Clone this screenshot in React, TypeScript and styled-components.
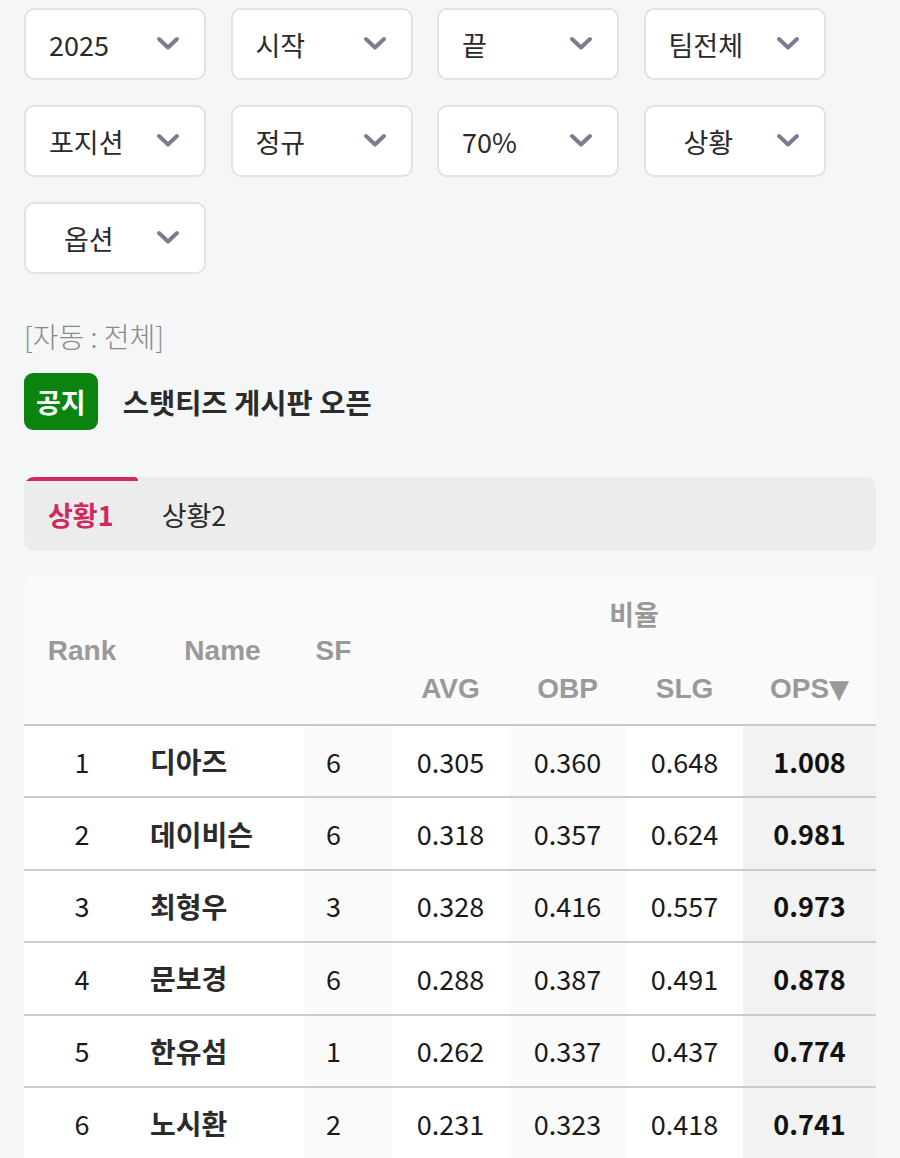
import React from "react";
import styled, { createGlobalStyle } from "styled-components";

const GlobalStyle = createGlobalStyle`
  body {
    margin: 0;
    background: #f5f6f8;
    font-family: "Noto Sans CJK KR", "Noto Sans", sans-serif;
    color: #222;
  }
`;

const Page = styled.div`
  padding: 8px 24px 0 24px;
  width: 852px;
`;

const FilterGrid = styled.div`
  display: grid;
  grid-template-columns: repeat(4, 182px);
  column-gap: 24.5px;
  row-gap: 25px;
`;

const Select = styled.div<{ $center?: boolean }>`
  box-sizing: border-box;
  height: 72px;
  background: #fff;
  border: 2px solid #e1e2e5;
  border-radius: 10px;
  display: flex;
  align-items: center;
  justify-content: space-between;
  padding: 0 24px 0 ${({ $center }) => ($center ? "38px" : "23px")};
  font-size: 27px;
  color: #2a2a2a;
`;

const Chevron = () => (
  <svg width="24" height="16" viewBox="0 0 24 16">
    <path d="M3 3 L12 11.5 L21 3" fill="none" stroke="#787d90" strokeWidth="4" strokeLinecap="round" strokeLinejoin="round" />
  </svg>
);

const AutoNote = styled.div`
  margin-top: 42px;
  font-size: 28px;
  font-weight: 300;
  color: #8a8a8a;
  line-height: 40px;
`;

const Notice = styled.div`
  margin-top: 17px;
  display: flex;
  align-items: center;
  gap: 25px;
`;

const Badge = styled.span`
  background: #0b840f;
  color: #fff;
  font-weight: 700;
  font-size: 27px;
  height: 57px;
  padding: 0 12px;
  border-radius: 9px;
  display: flex;
  align-items: center;
`;

const NoticeText = styled.span`
  font-weight: 700;
  font-size: 28.5px;
  color: #2b2b2b;
`;

const TabBar = styled.div`
  margin-top: 47px;
  height: 74px;
  background: #ececec;
  border-radius: 10px;
  display: flex;
  overflow: hidden;
`;

const Tab = styled.div<{ $active?: boolean }>`
  position: relative;
  display: flex;
  align-items: center;
  white-space: nowrap;
  padding: 0 24px;
  font-size: 27px;
  font-weight: ${({ $active }) => ($active ? 700 : 400)};
  color: ${({ $active }) => ($active ? "#cf2a5e" : "#2a2a2a")};
  ${({ $active }) =>
    $active &&
    `
    &::before {
      content: "";
      position: absolute;
      top: 0;
      left: 0;
      right: 0;
      height: 4px;
      background: #cf2a5e;
      border-radius: 4px 4px 0 0;
    }
  `}
`;

const Card = styled.div`
  margin-top: 24px;
  background: #fafafa;
  border-radius: 12px 12px 0 0;
  overflow: hidden;
`;

const Table = styled.table`
  width: 100%;
  border-collapse: collapse;
  table-layout: fixed;
`;

const Th = styled.th<{ $shift?: boolean }>`
  height: 74px;
  box-sizing: border-box;
  padding: 3px ${({ $shift }) => ($shift ? "30px" : "0")} 0 0;
  font-family: "Liberation Sans", "Noto Sans CJK KR", sans-serif;
  font-weight: 700;
  font-size: 28px;
  color: #999;
  text-align: center;
`;

const GroupTh = styled(Th)`
  height: 76px;
  padding-top: 0;
  font-family: "Noto Sans CJK KR", sans-serif;
  font-size: 27px;
`;

const Arrow = styled.span`
  font-family: "DejaVu Sans", sans-serif;
  font-size: 26px;
`;

const HeadRow = styled.tr`
  border-bottom: 2px solid #c9c9c9;
`;

const Row = styled.tr`
  border-bottom: 2px solid #cccccc;
`;

const Td = styled.td<{ $bg?: string; $bold?: boolean; $left?: boolean; $shift?: boolean }>`
  height: 70.4px;
  padding: 0 ${({ $shift }) => ($shift ? "30px" : "0")} 0 ${({ $left }) => ($left ? "10px" : "0")};
  background: ${({ $bg }) => $bg || "#fff"};
  text-align: ${({ $left }) => ($left ? "left" : "center")};
  font-size: ${({ $left }) => ($left ? "28px" : "27px")};
  font-weight: ${({ $bold }) => ($bold ? 700 : 400)};
  color: ${({ $bold, $left }) => ($left ? "#2b2b2b" : $bold ? "#111" : "#1a1a1a")};
`;

const filters = [
  { label: "2025" },
  { label: "시작" },
  { label: "끝" },
  { label: "팀전체" },
  { label: "포지션" },
  { label: "정규" },
  { label: "70%" },
  { label: "상황", center: true },
  { label: "옵션", center: true },
];

const rows = [
  [1, "디아즈", 6, "0.305", "0.360", "0.648", "1.008"],
  [2, "데이비슨", 6, "0.318", "0.357", "0.624", "0.981"],
  [3, "최형우", 3, "0.328", "0.416", "0.557", "0.973"],
  [4, "문보경", 6, "0.288", "0.387", "0.491", "0.878"],
  [5, "한유섬", 1, "0.262", "0.337", "0.437", "0.774"],
  [6, "노시환", 2, "0.231", "0.323", "0.418", "0.741"],
];

export default function App() {
  return (
    <>
      <GlobalStyle />
      <Page>
        <FilterGrid>
          {filters.map((f) => (
            <Select key={f.label} $center={f.center}>
              <span>{f.label}</span>
              <Chevron />
            </Select>
          ))}
        </FilterGrid>

        <AutoNote>[자동 : 전체]</AutoNote>

        <Notice>
          <Badge>공지</Badge>
          <NoticeText>스탯티즈 게시판 오픈</NoticeText>
        </Notice>

        <TabBar>
          <Tab $active>상황1</Tab>
          <Tab>상황2</Tab>
        </TabBar>

        <Card>
          <Table>
            <colgroup>
              <col style={{ width: 116 }} />
              <col style={{ width: 165 }} />
              <col style={{ width: 87 }} />
              <col style={{ width: 117 }} />
              <col style={{ width: 117 }} />
              <col style={{ width: 117 }} />
              <col style={{ width: 133 }} />
            </colgroup>
            <thead>
              <tr>
                <Th rowSpan={2}>Rank</Th>
                <Th rowSpan={2}>Name</Th>
                <Th rowSpan={2} $shift>SF</Th>
                <GroupTh colSpan={4}>비율</GroupTh>
              </tr>
              <HeadRow>
                <Th>AVG</Th>
                <Th>OBP</Th>
                <Th>SLG</Th>
                <Th>
                  OPS<Arrow>▼</Arrow>
                </Th>
              </HeadRow>
            </thead>
            <tbody>
              {rows.map((r) => (
                <Row key={r[0]}>
                  <Td>{r[0]}</Td>
                  <Td $left $bold>{r[1]}</Td>
                  <Td $bg="#fafafa" $shift>{r[2]}</Td>
                  <Td>{r[3]}</Td>
                  <Td $bg="#fafafa">{r[4]}</Td>
                  <Td>{r[5]}</Td>
                  <Td $bg="#f2f2f2" $bold>{r[6]}</Td>
                </Row>
              ))}
            </tbody>
          </Table>
        </Card>
      </Page>
    </>
  );
}
